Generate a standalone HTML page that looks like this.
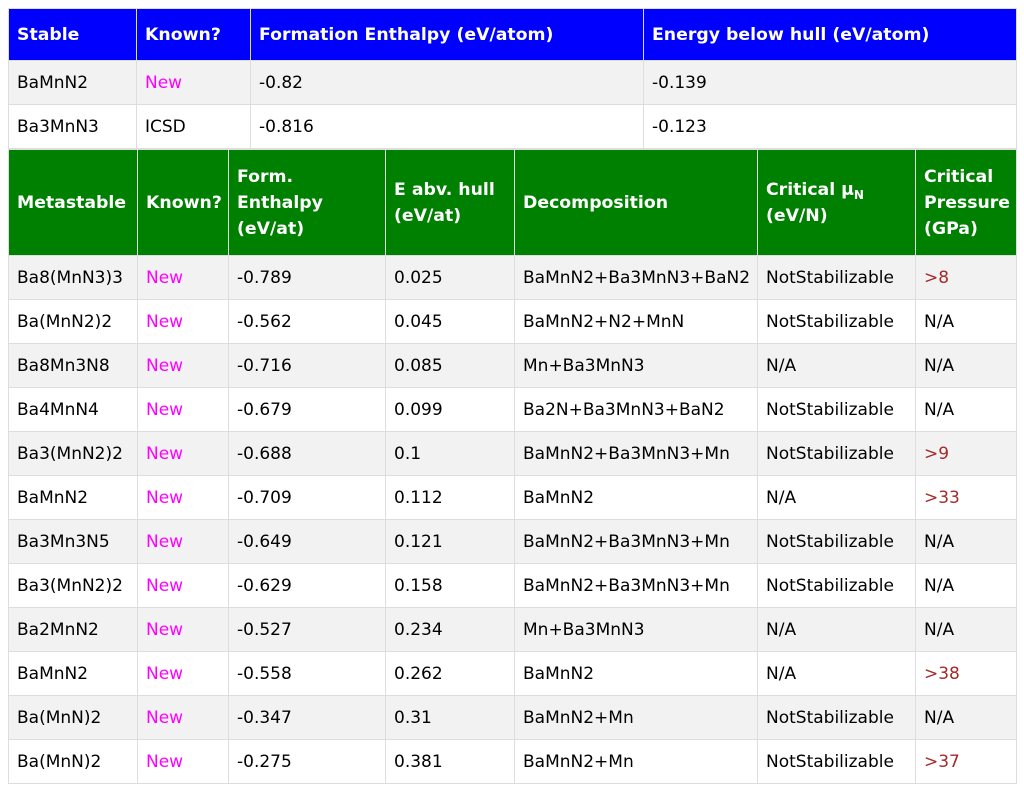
<!DOCTYPE html>
<html><head><meta charset="utf-8"><style>
body{margin:0;background:#fff;font-family:"DejaVu Sans","Liberation Sans",sans-serif;font-size:17px;color:#000}
table{position:absolute;left:8px;width:1008px;border-collapse:collapse;table-layout:fixed}
td,th{border:1px solid #ddd;padding:0 8px;text-align:left;white-space:nowrap;overflow:hidden;line-height:22px}
th{color:#fff;font-weight:bold;font-size:17.3px}
#t1{top:8px}
#t1 th{background:#0000ff;height:51px}
#t2{top:149px}
#t2 th{background:#008000;height:105px;line-height:26px}
td{height:42px;padding-top:1px}
tr.g td{background:#f2f2f2}
.n{color:#ff00ff}
.r{color:#a52a2a}
sub{font-size:12px;line-height:0;vertical-align:-4px}
</style></head><body>
<table id="t1">
<colgroup><col style="width:128px"><col style="width:114px"><col style="width:393px"><col style="width:373px"></colgroup>
<tr><th>Stable</th><th>Known?</th><th>Formation Enthalpy (eV/atom)</th><th>Energy below hull (eV/atom)</th></tr>
<tr class="g"><td>BaMnN2</td><td class="n">New</td><td>-0.82</td><td>-0.139</td></tr>
<tr><td>Ba3MnN3</td><td>ICSD</td><td>-0.816</td><td>-0.123</td></tr>
</table>
<table id="t2">
<colgroup><col style="width:129px"><col style="width:91px"><col style="width:157px"><col style="width:129px"><col style="width:243px"><col style="width:158px"><col style="width:101px"></colgroup>
<tr><th>Metastable</th><th>Known?</th><th>Form.<br>Enthalpy<br>(eV/at)</th><th>E abv. hull<br>(eV/at)</th><th>Decomposition</th><th>Critical μ<sub>N</sub><br>(eV/N)</th><th>Critical<br>Pressure<br>(GPa)</th></tr>
<tr class="g"><td>Ba8(MnN3)3</td><td class="n">New</td><td>-0.789</td><td>0.025</td><td>BaMnN2+Ba3MnN3+BaN2</td><td>NotStabilizable</td><td class="r">&gt;8</td></tr>
<tr><td>Ba(MnN2)2</td><td class="n">New</td><td>-0.562</td><td>0.045</td><td>BaMnN2+N2+MnN</td><td>NotStabilizable</td><td>N/A</td></tr>
<tr class="g"><td>Ba8Mn3N8</td><td class="n">New</td><td>-0.716</td><td>0.085</td><td>Mn+Ba3MnN3</td><td>N/A</td><td>N/A</td></tr>
<tr><td>Ba4MnN4</td><td class="n">New</td><td>-0.679</td><td>0.099</td><td>Ba2N+Ba3MnN3+BaN2</td><td>NotStabilizable</td><td>N/A</td></tr>
<tr class="g"><td>Ba3(MnN2)2</td><td class="n">New</td><td>-0.688</td><td>0.1</td><td>BaMnN2+Ba3MnN3+Mn</td><td>NotStabilizable</td><td class="r">&gt;9</td></tr>
<tr><td>BaMnN2</td><td class="n">New</td><td>-0.709</td><td>0.112</td><td>BaMnN2</td><td>N/A</td><td class="r">&gt;33</td></tr>
<tr class="g"><td>Ba3Mn3N5</td><td class="n">New</td><td>-0.649</td><td>0.121</td><td>BaMnN2+Ba3MnN3+Mn</td><td>NotStabilizable</td><td>N/A</td></tr>
<tr><td>Ba3(MnN2)2</td><td class="n">New</td><td>-0.629</td><td>0.158</td><td>BaMnN2+Ba3MnN3+Mn</td><td>NotStabilizable</td><td>N/A</td></tr>
<tr class="g"><td>Ba2MnN2</td><td class="n">New</td><td>-0.527</td><td>0.234</td><td>Mn+Ba3MnN3</td><td>N/A</td><td>N/A</td></tr>
<tr><td>BaMnN2</td><td class="n">New</td><td>-0.558</td><td>0.262</td><td>BaMnN2</td><td>N/A</td><td class="r">&gt;38</td></tr>
<tr class="g"><td>Ba(MnN)2</td><td class="n">New</td><td>-0.347</td><td>0.31</td><td>BaMnN2+Mn</td><td>NotStabilizable</td><td>N/A</td></tr>
<tr><td>Ba(MnN)2</td><td class="n">New</td><td>-0.275</td><td>0.381</td><td>BaMnN2+Mn</td><td>NotStabilizable</td><td class="r">&gt;37</td></tr>
</table>
</body></html>
